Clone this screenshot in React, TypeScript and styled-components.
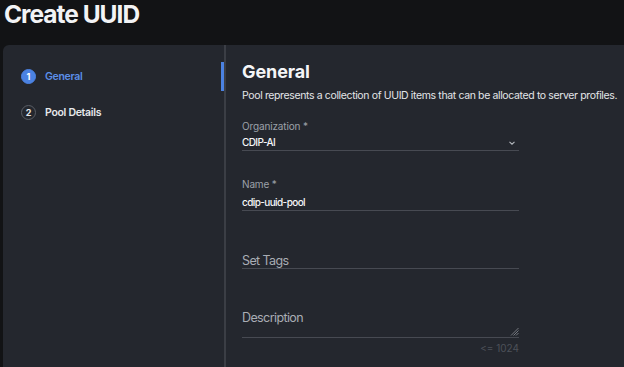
import styled, { createGlobalStyle } from 'styled-components';

const GlobalStyle = createGlobalStyle`
	html, body {
		margin: 0;
		padding: 0;
		background: #121315;
		overflow: hidden;
	}
	body {
		font-family: Inter, 'Noto Sans', sans-serif;
		color: #eceef1;
	}
`;

const Page = styled.div`
	width: 624px;
	height: 367px;
	padding-left: 3px;
	box-sizing: border-box;
	display: flex;
	flex-direction: column;
	overflow: hidden;
`;

const PageTitle = styled.h1`
	margin: 0 0 17px 1px;
	font-size: 24.5px;
	line-height: 28px;
	font-weight: 700;
	color: #f2f3f5;
	letter-spacing: -1px;
`;

const Card = styled.div`
	flex: 1;
	display: grid;
	grid-template-columns: 221px 1fr;
	background: #24272e;
	border-radius: 6px 0 0 0;
	width: 700px;
`;

const Sidebar = styled.nav`
	display: flex;
	flex-direction: column;
	gap: 7px;
	padding-top: 17px;
`;

const Step = styled.div<{ $active?: boolean }>`
	height: 29px;
	display: flex;
	align-items: center;
	gap: 9px;
	padding-left: 18px;
	border-right: 3px solid ${({ $active }) => ($active ? '#4b82e2' : 'transparent')};
	font-size: 10.5px;
	font-weight: 600;
	letter-spacing: -0.3px;
	color: ${({ $active }) => ($active ? '#5b8fe8' : '#e6e8eb')};
`;

const StepNumber = styled.span<{ $active?: boolean }>`
	width: 15px;
	height: 15px;
	box-sizing: border-box;
	border-radius: 50%;
	display: flex;
	align-items: center;
	justify-content: center;
	font-size: 9px;
	font-weight: 700;
	letter-spacing: 0;
	background: ${({ $active }) => ($active ? '#4b82e2' : 'transparent')};
	border: 1.5px solid ${({ $active }) => ($active ? '#4b82e2' : '#5a5e66')};
	color: ${({ $active }) => ($active ? '#ffffff' : '#e6e8eb')};
`;

const Content = styled.main`
	border-left: 2px solid #3b3e45;
	padding: 16px 0 0 16px;
	display: flex;
	flex-direction: column;
`;

const SectionTitle = styled.h2`
	margin: 0;
	font-size: 18px;
	line-height: 22px;
	font-weight: 700;
	letter-spacing: -0.1px;
	color: #f4f5f7;
`;

const Intro = styled.p`
	margin: 6px 0 0;
	font-size: 10.5px;
	line-height: 14px;
	letter-spacing: -0.37px;
	color: #e3e5e8;
	white-space: nowrap;
`;

const Field = styled.div<{ $top: number }>`
	width: 277px;
	margin-top: ${({ $top }) => $top}px;
	display: flex;
	flex-direction: column;
	position: relative;
`;

const Label = styled.label`
	font-size: 10px;
	line-height: 13px;
	letter-spacing: -0.15px;
	color: #9ca1a9;
`;

const Value = styled.div<{ $gap: number }>`
	margin-top: ${({ $gap }) => $gap}px;
	display: flex;
	align-items: center;
	justify-content: space-between;
	font-size: 10px;
	line-height: 13px;
	font-weight: 500;
	letter-spacing: -0.6px;
	color: #f5f6f8;
	padding-bottom: 1px;
	border-bottom: 1px solid #474a52;
`;

const Placeholder = styled.div<{ $height: number; $padTop: number }>`
	height: ${({ $height }) => $height}px;
	box-sizing: border-box;
	padding: ${({ $padTop }) => $padTop}px 0 0;
	font-size: 12.5px;
	line-height: 15px;
	letter-spacing: -0.6px;
	color: #a9adb4;
	border-bottom: 1px solid #474a52;
	position: relative;
`;

const Chevron = styled.svg`
	width: 8px;
	height: 8px;
	margin-right: 3px;
`;

const ResizeGrip = styled.svg`
	position: absolute;
	right: 0;
	bottom: 1px;
	width: 9px;
	height: 9px;
`;

const Counter = styled.div`
	margin-top: 4px;
	align-self: flex-end;
	font-size: 10px;
	line-height: 13px;
	color: #4d5159;
`;

const App = () => {
	return (
		<>
			<GlobalStyle />
			<Page>
				<PageTitle>Create UUID</PageTitle>
				<Card>
					<Sidebar>
						<Step $active>
							<StepNumber $active>1</StepNumber>
							General
						</Step>
						<Step>
							<StepNumber>2</StepNumber>
							Pool Details
						</Step>
					</Sidebar>
					<Content>
						<SectionTitle>General</SectionTitle>
						<Intro>
							Pool represents a collection of UUID items that can be allocated to server profiles.
						</Intro>
						<Field $top={17}>
							<Label>Organization *</Label>
							<Value $gap={3}>
								CDIP-AI
								<Chevron viewBox='0 0 8 8'>
									<path d='M1.5 2.8 L4 5.2 L6.5 2.8' fill='none' stroke='#b4b8be' strokeWidth='1.1' />
								</Chevron>
							</Value>
						</Field>
						<Field $top={27}>
							<Label>Name *</Label>
							<Value $gap={5}>cdip-uuid-pool</Value>
						</Field>
						<Field $top={38}>
							<Placeholder $height={20} $padTop={4}>Set Tags</Placeholder>
						</Field>
						<Field $top={29}>
							<Placeholder $height={40} $padTop={12}>
								Description
								<ResizeGrip viewBox='0 0 9 9'>
									<path d='M8.5 1 L1 8.5 M8.5 3.5 L3.5 8.5 M8.5 6 L6 8.5' stroke='#8a8e95' strokeWidth='0.8' />
								</ResizeGrip>
							</Placeholder>
							<Counter>{'<= 1024'}</Counter>
						</Field>
					</Content>
				</Card>
			</Page>
		</>
	);
};

export default App;
